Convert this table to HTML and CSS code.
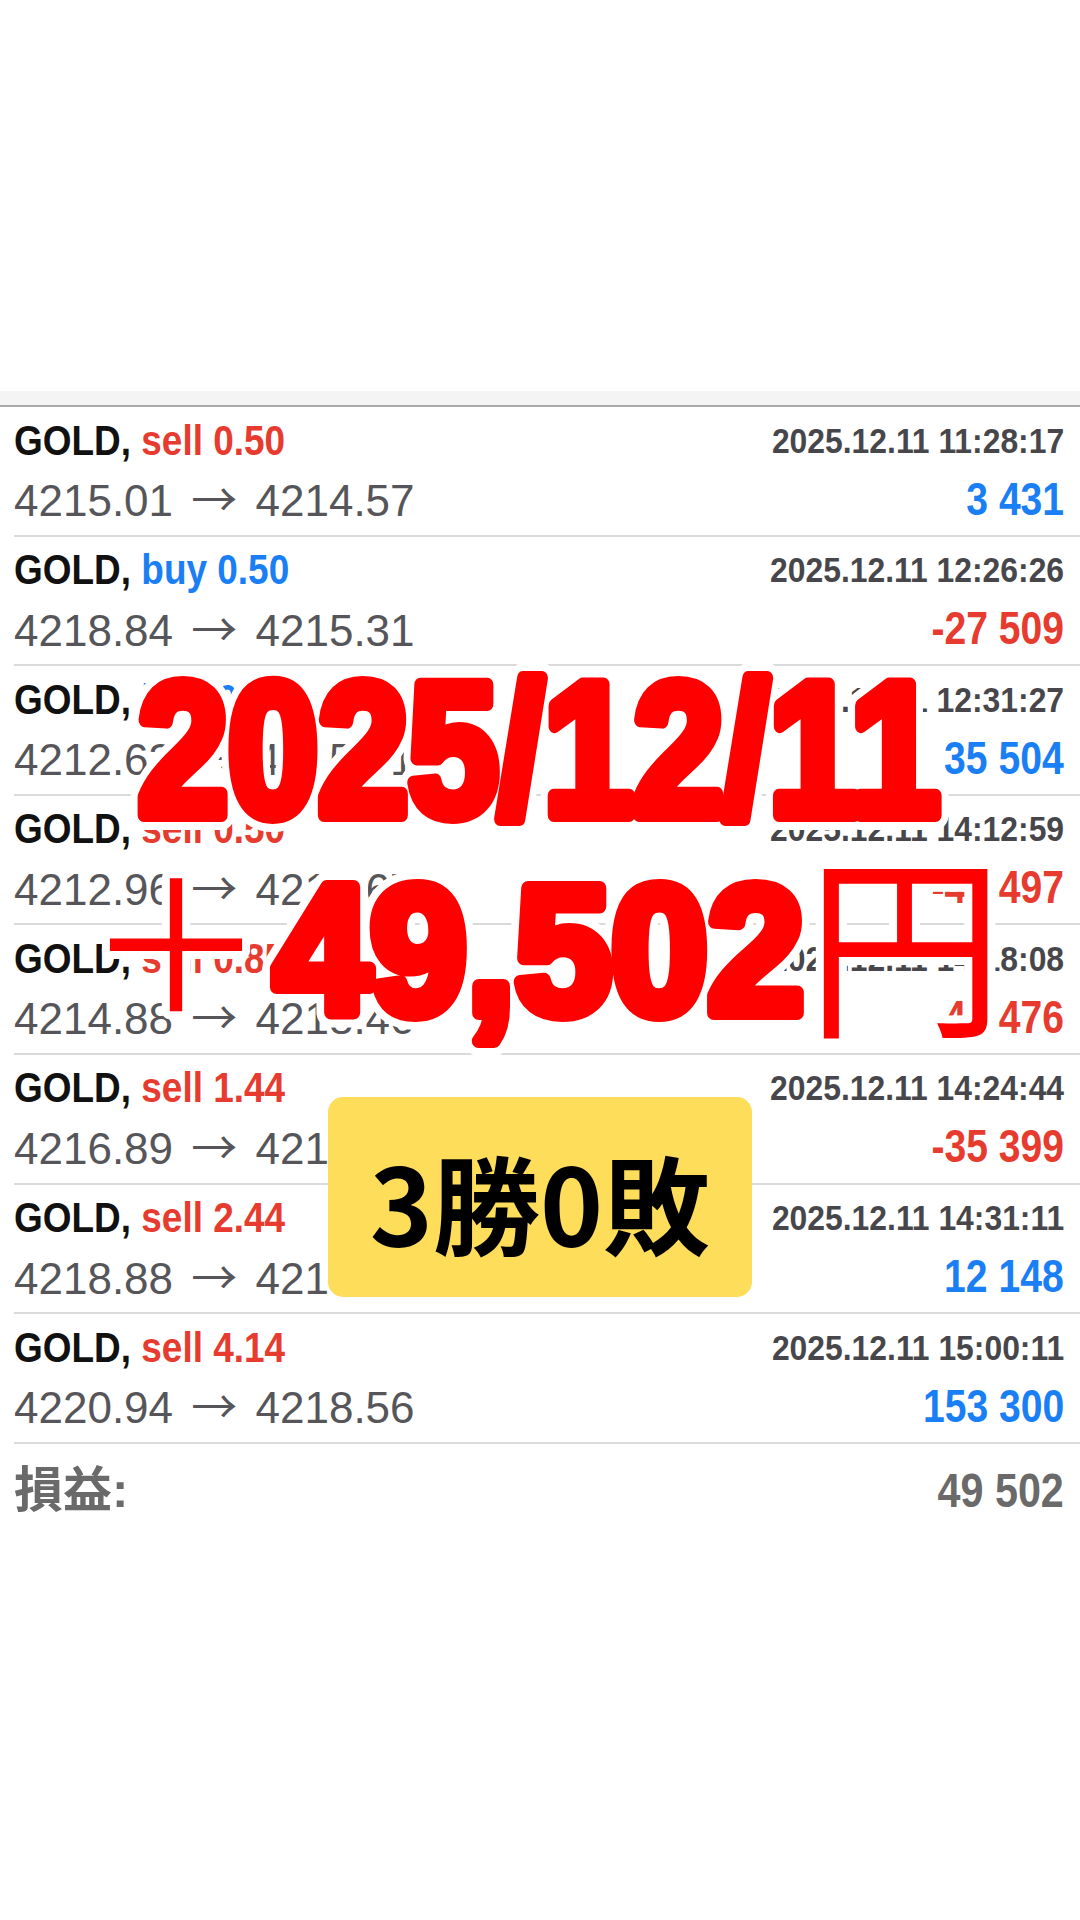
FILE: index.html
```html
<!DOCTYPE html>
<html lang="ja">
<head>
    <meta charset="UTF-8">
    <meta name="viewport" content="width=device-width, initial-scale=1.0">
    <title>GOLD 2025/12/11</title>
    <link rel="stylesheet" href="styles.css">
</head>
<body>
    <div class="page">
        <div class="history">
            <div class="band"></div>

            <div class="deal">
                <div class="line">
                    <span class="pair">GOLD, <em class="sell">sell 0.50</em></span>
                    <span class="time">2025.12.11 11:28:17</span>
                </div>
                <div class="line">
                    <span class="price">4215.01 <span class="arrow">→</span> 4214.57</span>
                    <span class="profit up">3 431</span>
                </div>
            </div>
            <div class="deal">
                <div class="line">
                    <span class="pair">GOLD, <em class="buy">buy 0.50</em></span>
                    <span class="time">2025.12.11 12:26:26</span>
                </div>
                <div class="line">
                    <span class="price">4218.84 <span class="arrow">→</span> 4215.31</span>
                    <span class="profit down">-27 509</span>
                </div>
            </div>
            <div class="deal">
                <div class="line">
                    <span class="pair">GOLD, <em class="buy">buy 0.85</em></span>
                    <span class="time">2025.12.11 12:31:27</span>
                </div>
                <div class="line">
                    <span class="price">4212.63 <span class="arrow">→</span> 4215.31</span>
                    <span class="profit up">35 504</span>
                </div>
            </div>
            <div class="deal">
                <div class="line">
                    <span class="pair">GOLD, <em class="sell">sell 0.50</em></span>
                    <span class="time">2025.12.11 14:12:59</span>
                </div>
                <div class="line">
                    <span class="price">4212.96 <span class="arrow">→</span> 4218.67</span>
                    <span class="profit down">-44 497</span>
                </div>
            </div>
            <div class="deal">
                <div class="line">
                    <span class="pair">GOLD, <em class="sell">sell 0.85</em></span>
                    <span class="time">2025.12.11 14:18:08</span>
                </div>
                <div class="line">
                    <span class="price">4214.88 <span class="arrow">→</span> 4218.46</span>
                    <span class="profit down">-47 476</span>
                </div>
            </div>
            <div class="deal">
                <div class="line">
                    <span class="pair">GOLD, <em class="sell">sell 1.44</em></span>
                    <span class="time">2025.12.11 14:24:44</span>
                </div>
                <div class="line">
                    <span class="price">4216.89 <span class="arrow">→</span> 4218.47</span>
                    <span class="profit down">-35 399</span>
                </div>
            </div>
            <div class="deal">
                <div class="line">
                    <span class="pair">GOLD, <em class="sell">sell 2.44</em></span>
                    <span class="time">2025.12.11 14:31:11</span>
                </div>
                <div class="line">
                    <span class="price">4218.88 <span class="arrow">→</span> 4218.56</span>
                    <span class="profit up">12 148</span>
                </div>
            </div>
            <div class="deal">
                <div class="line">
                    <span class="pair">GOLD, <em class="sell">sell 4.14</em></span>
                    <span class="time">2025.12.11 15:00:11</span>
                </div>
                <div class="line">
                    <span class="price">4220.94 <span class="arrow">→</span> 4218.56</span>
                    <span class="profit up">153 300</span>
                </div>
            </div>

            <div class="total">
                <span class="total-label">損益:</span>
                <span class="total-value">49 502</span>
            </div>
        </div>

        <!-- big red caption with white halo, drawn over the list -->
        <svg class="stamp" viewBox="0 640 1080 420" width="1080" height="420">
            <defs>
                <text id="st-date" class="st-num st-date" x="138" y="815" textLength="802" lengthAdjust="spacingAndGlyphs">2025/12/11</text>
                <text id="st-plus" class="st-cjk st-plus" x="176" y="1013">＋</text>
                <text id="st-sum" class="st-num st-sum" x="274" y="1013" textLength="530" lengthAdjust="spacingAndGlyphs">49,502</text>
                <text id="st-yen" class="st-cjk st-yen" x="905" y="1022">円</text>
            </defs>
            <use href="#st-date" class="halo"/>
            <use href="#st-plus" class="halo thin"/>
            <use href="#st-sum" class="halo"/>
            <use href="#st-yen" class="halo thin"/>
            <use href="#st-date" class="ink"/>
            <use href="#st-plus" class="ink thin"/>
            <use href="#st-sum" class="ink"/>
            <use href="#st-yen" class="ink thin"/>
        </svg>

        <div class="score">3勝0敗</div>
    </div>
</body>
</html>
```

FILE: styles.css
```css
body {
    margin: 0;
    background: #fff;
    font-family: "Liberation Sans", Arial, "Noto Sans CJK JP", sans-serif;
}
.page {
    position: relative;
    width: 1080px;
    height: 1920px;
    overflow: hidden;
}
.history {
    padding-top: 391px;
}
.band {
    height: 14px;
    background: #f4f4f4;
    border-bottom: 2px solid #a9a9a9;
}
.deal {
    margin-left: 14px;
    padding: 4.5px 16px 0 0;
    height: 129.6px;
    box-sizing: border-box;
    border-bottom: 2px solid #dadada;
}
.line {
    display: flex;
    justify-content: space-between;
    align-items: center;
    height: 58px;
    line-height: 58px;
    white-space: nowrap;
}
.pair {
    display: inline-block;
    font-size: 42px;
    font-weight: 700;
    color: #111;
    transform: scaleX(0.88);
    transform-origin: left center;
}
.pair em {
    font-style: normal;
}
.sell {
    color: #e63b2e;
}
.buy {
    color: #1a7ef5;
}
.time {
    display: inline-block;
    font-size: 35px;
    font-weight: 700;
    color: #47474b;
    transform: scaleX(0.91);
    transform-origin: right center;
}
.price {
    font-size: 44px;
    color: #56565a;
}
.arrow {
    font-family: "Noto Sans CJK JP", sans-serif;
    font-size: 46px;
    font-weight: 400;
    margin: 0 6px;
}
.profit {
    display: inline-block;
    font-size: 46px;
    font-weight: 700;
    transform: scaleX(0.85);
    transform-origin: right center;
}
.up {
    color: #1a7ef5;
}
.down {
    color: #e63b2e;
}
.total {
    margin-left: 14px;
    padding-right: 16px;
    height: 93px;
    display: flex;
    justify-content: space-between;
    align-items: center;
    line-height: 93px;
    color: #6a6a6a;
    font-weight: 700;
}
.total-label {
    font-size: 49px;
}
.total-value {
    display: inline-block;
    font-size: 48px;
    transform: scaleX(0.86);
    transform-origin: right center;
}

/* overlay caption */
.stamp {
    position: absolute;
    left: 0;
    top: 640px;
}
.st-num {
    font-family: "Liberation Sans", Arial, sans-serif;
    font-weight: 700;
}
.st-date {
    font-size: 189px;
}
.st-sum {
    font-size: 181px;
}
.st-cjk {
    font-family: "Noto Sans CJK JP", sans-serif;
    font-weight: 400;
    text-anchor: middle;
}
.st-plus {
    font-size: 182px;
}
.st-yen {
    font-size: 198px;
}
.halo {
    fill: #fff;
    stroke: #fff;
    stroke-width: 30px;
    stroke-linejoin: round;
}
.ink {
    fill: #ff0000;
    stroke: #ff0000;
    stroke-width: 14px;
    stroke-linejoin: round;
}
.halo.thin {
    stroke-width: 16px;
}
.ink.thin {
    stroke-width: 0;
}
.score {
    position: absolute;
    left: 328px;
    top: 1097px;
    width: 424px;
    height: 200px;
    border-radius: 15px;
    background: #fedd5b;
    display: flex;
    align-items: center;
    justify-content: center;
    font-family: "Noto Sans CJK JP", sans-serif;
    font-size: 107px;
    font-weight: 700;
    line-height: 1;
    color: #000;
    padding-top: 6px;
    box-sizing: border-box;
}
```
